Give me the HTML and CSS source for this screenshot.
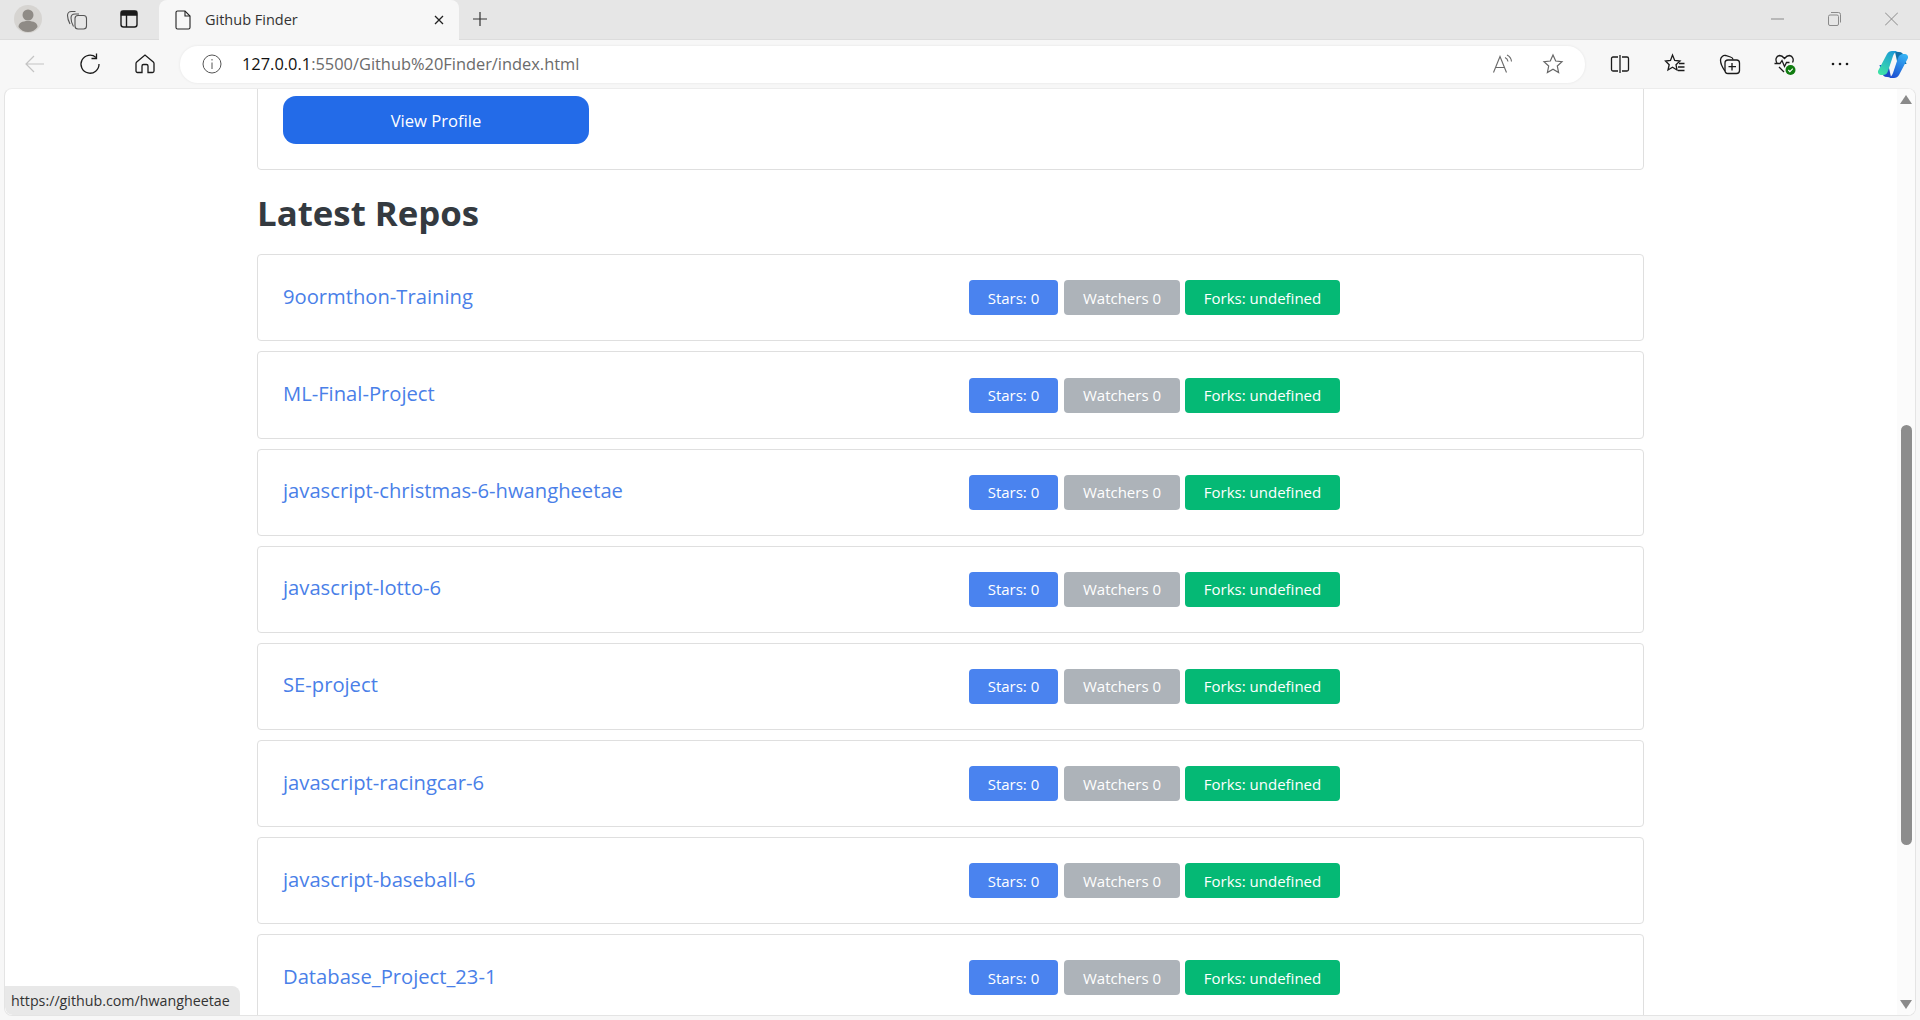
FILE: index.html
```html
<!DOCTYPE html>
<html>
<head>
	<title>Github Finder</title>
	<meta name="viewport" content="width=device-width, initial-scale=1.0">
	<link rel="stylesheet" href="styles.css">
</head>
<body>
	<div class="tabbar">
		<div class="tabbar-left">
			<div class="avatar">
				<svg width="30" height="30" viewBox="0 0 30 30"><circle cx="15" cy="15" r="14" fill="#d6d4d1"/><circle cx="15" cy="11" r="5.500" fill="#8f8b86"/><path d="M5.500 23c0-4 3.500-6 9.500-6s9.500 2 9.500 6c-2 3-5.500 5-9.500 5s-7.500-2-9.500-5z" fill="#8f8b86"/></svg>
			</div>
			<button class="icon-btn wide">
				<svg width="24" height="24" viewBox="0 0 24 24" fill="none" stroke="#555" stroke-width="1.100"><path d="M5 17C3.500 14 2.500 11 2.500 8.500c0-2.500 1.500-4 4-4h4"/><path d="M8.500 19.500C7 17 6 13.500 6 11c0-2.500 1.500-4 4-4h4"/><rect x="10" y="8.500" width="11.500" height="13.500" rx="3"/></svg>
			</button>
			<button class="icon-btn wide">
				<svg width="20" height="20" viewBox="0 0 20 20" fill="none" stroke="#1a1a1a" stroke-width="1.400"><rect x="2" y="2" width="16" height="16" rx="2.500"/><path d="M2.500 2.500h15v3.500h-15z" fill="#1a1a1a"/><path d="M7.500 6v12"/></svg>
			</button>
		</div>
		<div class="tab">
			<svg class="tab-file" width="16" height="20" viewBox="0 0 16 20" fill="none" stroke="#222" stroke-width="1.100"><path d="M1 2.500A1.500 1.500 0 0 1 2.500 1h7.500l5 5v11.500a1.500 1.500 0 0 1-1.500 1.500h-11A1.500 1.500 0 0 1 1 17.500z"/><path d="M10 1v5h5"/></svg>
			<span class="tab-title">Github Finder</span>
			<svg class="tab-close" width="12" height="12" viewBox="0 0 12 12" stroke="#222" stroke-width="1.300"><path d="M2 2l8 8M10 2l-8 8"/></svg>
		</div>
		<button class="icon-btn new-tab">
			<svg width="18" height="18" viewBox="0 0 18 18" stroke="#333" stroke-width="1.200"><path d="M9 2v14M2 9h14"/></svg>
		</button>
		<div class="window-btns">
			<svg width="13" height="14" viewBox="0 0 13 14" stroke="#8a8a8a"><path d="M0 7h13"/></svg>
			<svg width="13" height="14" viewBox="0 0 13 14" fill="none" stroke="#8a8a8a"><rect x="0.500" y="3" width="10" height="10.500" rx="1.500"/><path d="M3 0.500h7.500a2 2 0 0 1 2 2v8"/></svg>
			<svg width="13" height="14" viewBox="0 0 13 14" stroke="#8a8a8a"><path d="M0 0.500l13 13M13 0.500l-13 13"/></svg>
		</div>
	</div>

	<div class="toolbar">
		<button class="icon-btn">
			<svg width="20" height="20" viewBox="0 0 20 20" fill="none" stroke="#c4c4c4" stroke-width="1.200"><path d="M19 10H1M9 2l-8 8 8 8"/></svg>
		</button>
		<button class="icon-btn">
			<svg width="22" height="22" viewBox="0 0 22 22" fill="none" stroke="#1a1a1a" stroke-width="1.300"><path d="M17 4.500A9 9 0 1 0 20 11"/><path d="M17.500 0.500v5h-5"/></svg>
		</button>
		<button class="icon-btn">
			<svg width="20" height="20" viewBox="0 0 20 20" fill="none" stroke="#1a1a1a" stroke-width="1.300"><path d="M1 9.500a2 2 0 0 1 .7-1.500L10 1l8.300 7a2 2 0 0 1 .7 1.500V17a1.500 1.500 0 0 1-1.500 1.500H13V12a1.500 1.500 0 0 0-1.500-1.500h-3A1.500 1.500 0 0 0 7 12v6.500H2.500A1.500 1.500 0 0 1 1 17z"/></svg>
		</button>
		<div class="address">
			<svg class="info" width="20" height="20" viewBox="0 0 20 20" fill="none" stroke="#555" stroke-width="1"><circle cx="10" cy="10" r="9"/><path d="M10 8.500v6.500M10 5v1.500"/></svg>
			<span class="url"><span class="url-host">127.0.0.1</span>:5500/Github%20Finder/index.html</span>
			<span class="address-spacer"></span>
			<svg width="22" height="20" viewBox="0 0 22 20" fill="none" stroke="#6a6a6a" stroke-width="1.100"><path d="M1.500 18.500L8 2.500l6.500 16M4 13.500h8"/><path d="M13 3.500a5 5 0 0 1 3 4M15 1a8 8 0 0 1 4.500 6.500"/></svg>
			<svg class="address-star" width="22" height="22" viewBox="0 0 22 22" fill="none" stroke="#666" stroke-width="1.200"><path d="M11 2l2.700 6 6.300.7-4.700 4.300 1.300 6.500L11 16.200 5.400 19.500 6.700 13 2 8.700 8.300 8z"/></svg>
		</div>
		<div class="toolbar-right">
			<button class="icon-btn">
				<svg width="20" height="20" viewBox="0 0 20 20" fill="none" stroke="#1a1a1a" stroke-width="1.300"><path d="M8 3H3a1.500 1.500 0 0 0-1.500 1.500v11A1.500 1.500 0 0 0 3 17h5M12 3h5a1.500 1.500 0 0 1 1.500 1.500v11A1.500 1.500 0 0 1 17 17h-5M10 1v18"/></svg>
			</button>
			<button class="icon-btn">
				<svg width="22" height="22" viewBox="0 0 22 22" fill="none" stroke="#1a1a1a" stroke-width="1.300"><path d="M8.500 2l2.200 5.500 5.300.5-4 3.700 1 5.300-4.500-2.800L4 17l1.200-5.300L1.500 8l5-.5z"/><path d="M15 10.500h5.500M14 14h6.500M14 17.500h6.500"/></svg>
			</button>
			<button class="icon-btn">
				<svg width="22" height="22" viewBox="0 0 22 22" fill="none" stroke="#1a1a1a" stroke-width="1.300"><path d="M6 18C3 14 1.500 10 1.500 7c0-3 3-5 5-4.500l5 1.500c1.500.5 2.500 1 2.500 2.500"/><rect x="6" y="7" width="14.500" height="13.500" rx="3"/><path d="M13 10v7.500M9.500 13.700h7.500"/></svg>
			</button>
			<button class="icon-btn">
				<svg width="24" height="24" viewBox="0 0 24 24" fill="none"><path d="M4 11C2 8 3 4 6.500 3.500c2 0 3.500 1 5 3 1.500-2 3-3 5-3C20 4 21 8 19.500 10.500" stroke="#1a1a1a" stroke-width="1.300"/><path d="M1.500 11.500H7l2-3 2.500 6 2-4h3M6 15l5 5" stroke="#1a1a1a" stroke-width="1.300"/><circle cx="17.500" cy="18" r="5" fill="#107c10"/><path d="M15.300 18l1.600 1.600 2.900-3" stroke="#fff" stroke-width="1.100"/></svg>
			</button>
			<button class="icon-btn">
				<svg width="20" height="20" viewBox="0 0 20 20" fill="#1a1a1a"><circle cx="3" cy="10" r="1.300"/><circle cx="10" cy="10" r="1.300"/><circle cx="17" cy="10" r="1.300"/></svg>
			</button>
			<button class="icon-btn copilot">
				<svg width="30" height="27" viewBox="0 0 30 27">
					<defs>
						<linearGradient id="cpA" x1="0.700" y1="0" x2="0.200" y2="1"><stop offset="0" stop-color="#1a9ad6"/><stop offset="1" stop-color="#3fe3a6"/></linearGradient>
						<linearGradient id="cpB" x1="0.700" y1="0" x2="0.200" y2="1"><stop offset="0" stop-color="#1d4fd1"/><stop offset="1" stop-color="#36b4f5"/></linearGradient>
					</defs>
					<path d="M17 1h4c3 0 4.500 2 5.500 5l2 7h-6c-2 0-3-1-3.500-3z" fill="#0f6fa8"/>
					<path d="M13 26H9c-3 0-4.500-2-5.500-5l-2-7h6c2 0 3 1 3.500 3z" fill="#1c49c8"/>
					<path d="M9 3c1-2 3-3 5-3h7c-3 0-5 2-6 5l-5 15c-1 3-3 4-5 4H3c-2 0-3.500-2-3-4z" fill="url(#cpA)"/>
					<path d="M9 3c1-2 3-3 5-3h7c-3 0-5 2-6 5l-5 15c-1 3-3 4-5 4H3c-2 0-3.500-2-3-4z" fill="url(#cpB)" transform="rotate(180 15 13.500)"/>
				</svg>
			</button>
		</div>
	</div>

	<div class="viewport">
		<div class="page">
			<div class="container">
				<div class="card profile-card">
					<a class="btn-profile" href="#">View Profile</a>
				</div>
				<h2 class="section-title">Latest Repos</h2>
				<div class="card repo"><a class="repo-name" href="#">9oormthon-Training</a><div class="badges"><span class="badge stars">Stars: 0</span><span class="badge watchers">Watchers 0</span><span class="badge forks">Forks: undefined</span></div></div>
				<div class="card repo"><a class="repo-name" href="#">ML-Final-Project</a><div class="badges"><span class="badge stars">Stars: 0</span><span class="badge watchers">Watchers 0</span><span class="badge forks">Forks: undefined</span></div></div>
				<div class="card repo"><a class="repo-name" href="#">javascript-christmas-6-hwangheetae</a><div class="badges"><span class="badge stars">Stars: 0</span><span class="badge watchers">Watchers 0</span><span class="badge forks">Forks: undefined</span></div></div>
				<div class="card repo"><a class="repo-name" href="#">javascript-lotto-6</a><div class="badges"><span class="badge stars">Stars: 0</span><span class="badge watchers">Watchers 0</span><span class="badge forks">Forks: undefined</span></div></div>
				<div class="card repo"><a class="repo-name" href="#">SE-project</a><div class="badges"><span class="badge stars">Stars: 0</span><span class="badge watchers">Watchers 0</span><span class="badge forks">Forks: undefined</span></div></div>
				<div class="card repo"><a class="repo-name" href="#">javascript-racingcar-6</a><div class="badges"><span class="badge stars">Stars: 0</span><span class="badge watchers">Watchers 0</span><span class="badge forks">Forks: undefined</span></div></div>
				<div class="card repo"><a class="repo-name" href="#">javascript-baseball-6</a><div class="badges"><span class="badge stars">Stars: 0</span><span class="badge watchers">Watchers 0</span><span class="badge forks">Forks: undefined</span></div></div>
				<div class="card repo"><a class="repo-name" href="#">Database_Project_23-1</a><div class="badges"><span class="badge stars">Stars: 0</span><span class="badge watchers">Watchers 0</span><span class="badge forks">Forks: undefined</span></div></div>
			</div>
		</div>
		<div class="scrollbar">
			<svg width="12" height="9" viewBox="0 0 12 9" fill="#8a8a8a"><path d="M6 0l6 9H0z"/></svg>
			<div class="scroll-track"><div class="scroll-thumb"></div></div>
			<svg width="12" height="9" viewBox="0 0 12 9" fill="#8a8a8a"><path d="M0 0h12L6 9z"/></svg>
		</div>
		<div class="status-bubble">https://github.com/hwangheetae</div>
	</div>
</body>
</html>
```
FILE: styles.css
```css
* {
	box-sizing: border-box;
}

body {
	font-family: 'Open Sans', 'Noto Sans', sans-serif;
	background-color: #f7f7f7;
	display: flex;
	flex-direction: column;
	height: 100vh;
	margin: 0;
	overflow: hidden;
	color: #212529;
}

button {
	background: transparent;
	border: none;
	padding: 0;
}

.icon-btn {
	display: flex;
	justify-content: center;
	align-items: center;
	width: 55px;
	height: 32px;
}

/* tab strip */
.tabbar {
	display: flex;
	align-items: flex-end;
	height: 40px;
	background-color: #e6e6e6;
	border-bottom: 1px solid #dcdcdc;
	flex-shrink: 0;
}

.tabbar-left {
	display: flex;
	align-items: center;
	height: 40px;
	width: 159px;
	padding-left: 13px;
}

.avatar {
	width: 30px;
	height: 30px;
	margin-right: 8px;
}

.icon-btn.wide {
	width: 52px;
}

.tab {
	display: flex;
	align-items: center;
	width: 300px;
	height: 40px;
	margin-bottom: -1px;
	padding: 0 14px 0 16px;
	background-color: #f7f7f7;
	border-radius: 8px 8px 0 0;
}

.tab-title {
	flex: 1;
	margin-left: 14px;
	margin-bottom: 2px;
	font-size: 14.500px;
	color: #333;
}

.new-tab {
	width: 42px;
	height: 40px;
}

.window-btns {
	display: flex;
	align-items: center;
	gap: 44px;
	height: 40px;
	margin-left: auto;
	padding-right: 22px;
}

/* address row */
.toolbar {
	display: flex;
	align-items: center;
	height: 48px;
	padding-left: 7px;
	flex-shrink: 0;
}

.address {
	display: flex;
	align-items: center;
	width: 1405px;
	height: 37px;
	margin-left: 8px;
	padding: 0 18px 0 22px;
	background-color: #fff;
	border-radius: 18px;
	box-shadow: 0 0 3px rgba(0, 0, 0, 0.08);
}

.url {
	margin-left: 20px;
	margin-bottom: 2px;
	font-size: 16.400px;
	color: #6b6b6b;
}

.url-host {
	color: #111;
}

.address-spacer {
	flex: 1;
}

.address-star {
	margin-left: 28px;
	margin-right: 3px;
}

.toolbar-right {
	display: flex;
	align-items: center;
	margin-left: 7px;
}

.copilot {
	width: 40px;
	margin-left: 6px;
}

/* page */
.viewport {
	position: relative;
	display: flex;
	flex: 1;
	min-height: 0;
	margin: 0 4px 4px 4px;
	background-color: #fff;
	border: 1px solid #e4e4e4;
	border-top: 1px solid #ececec;
	border-radius: 8px;
	overflow: hidden;
}

.page {
	flex: 1;
	min-width: 0;
	padding-top: 6px;
	overflow: hidden;
}

.container {
	width: 1387px;
	margin-left: 252px;
}

.card {
	background-color: #fff;
	border: 1px solid #dfdfdf;
	border-radius: 4px;
}

.profile-card {
	margin-top: -30px;
	padding: 30px 25px 25px 25px;
}

.btn-profile {
	display: flex;
	justify-content: center;
	align-items: center;
	width: 306px;
	height: 48px;
	background-color: #236be8;
	border-radius: 13px;
	color: #fff;
	font-size: 16.600px;
	text-decoration: none;
}

.section-title {
	margin: 18px 0 16.300px 0;
	font-size: 34.800px;
	line-height: 50px;
	font-weight: 700;
	color: #343a40;
}

.repo {
	display: grid;
	grid-template-columns: 686px 1fr;
	align-items: center;
	height: 87.150px;
	margin-bottom: 10px;
	padding: 0 25px;
}

.repo-name {
	font-size: 20.200px;
	color: #4a7fe8;
	text-decoration: none;
	margin-bottom: 4px;
}

.badges {
	display: flex;
	gap: 5px;
}

.badge {
	display: flex;
	justify-content: center;
	align-items: center;
	height: 35px;
	border-radius: 4px;
	color: #fff;
	font-size: 15px;
}

.stars {
	width: 89px;
	background-color: #4a83ef;
}

.watchers {
	width: 116px;
	margin-left: 1px;
	background-color: #adb3b9;
}

.forks {
	width: 155px;
	background-color: #05b975;
}

/* scrollbar */
.scrollbar {
	display: flex;
	flex-direction: column;
	align-items: center;
	width: 18px;
	padding: 6px 0;
	background-color: #fbfbfb;
}

.scroll-track {
	flex: 1;
	padding: 321px 0 0 0;
	width: 11px;
}

.scroll-thumb {
	width: 11px;
	height: 420px;
	background-color: #8d8d8d;
	border-radius: 6px;
}

.status-bubble {
	position: absolute;
	left: 0;
	bottom: 0;
	width: 235px;
	height: 29px;
	padding-left: 6px;
	background-color: #e8e8e8;
	border-radius: 0 8px 0 8px;
	font-size: 14.250px;
	line-height: 29px;
	color: #333;
}
```
